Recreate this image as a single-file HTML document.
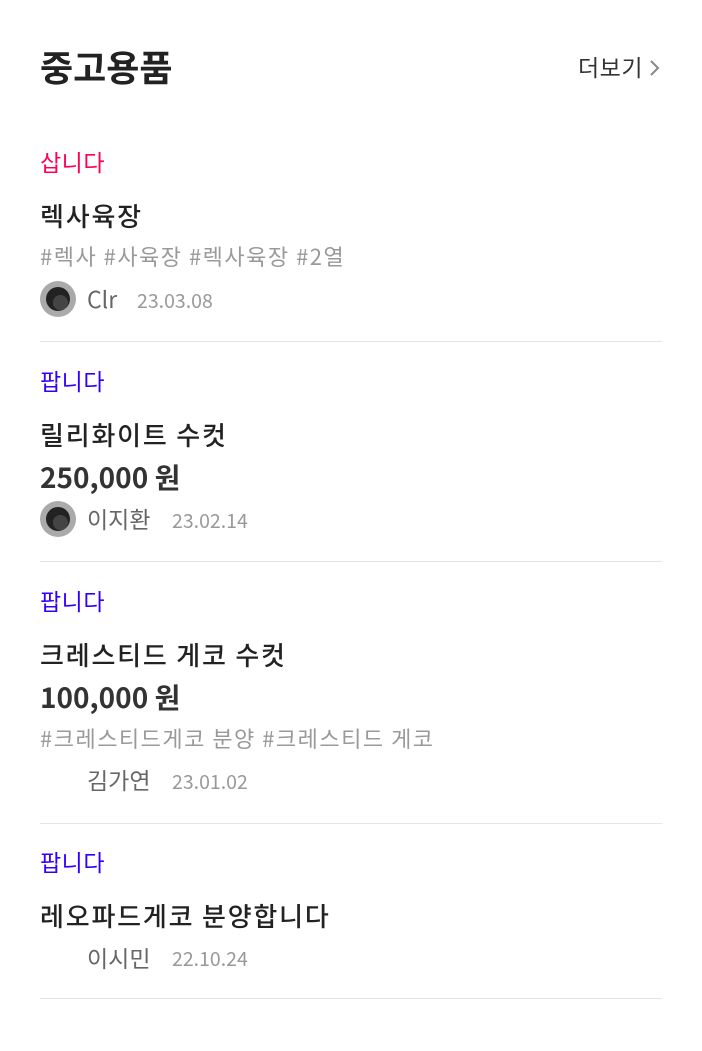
<!DOCTYPE html>
<html><head><meta charset="utf-8"><style>
body{margin:0;width:702px;height:1051px;background:#fff;position:relative;font-family:"Noto Sans CJK KR","Liberation Sans",sans-serif;color:#222;overflow:hidden}
.a{position:absolute;white-space:nowrap;line-height:1}
.h{left:40px;top:48px;font-size:36px;font-weight:700}
.more{left:578px;top:55px;font-size:23px;color:#333;letter-spacing:.5px}
.more svg{vertical-align:-1px;margin-left:7px}
.buy{font-size:23px;color:#ff0055;letter-spacing:.5px}
.sell{font-size:23px;color:#3300ff;letter-spacing:.5px}
.t{font-size:26px;font-weight:500;color:#222;letter-spacing:1.8px}
.p{font-size:28px;font-weight:700;color:#333}
.tag{font-size:22px;color:#999;letter-spacing:1.5px}
.n{font-size:23px;color:#666}
.d{font-size:19.5px;color:#999}
.av{position:absolute;left:40px;width:36px;height:36px;border-radius:50%;background:#aaa}
.av::after{content:"";position:absolute;left:6px;top:6px;width:24px;height:24px;border-radius:50%;background:radial-gradient(circle at 60% 65%,#444 0 35%,#222 36%)}
.l{position:absolute;left:40px;width:622px;height:1px;background:#e5e5e5}
</style></head><body>
<div class="a h">중고용품</div>
<div class="a more">더보기<svg width="10" height="18" viewBox="0 0 10 18"><path d="M1 2l7 7-7 7" fill="none" stroke="#888" stroke-width="2"/></svg></div>

<div class="a buy" style="left:40px;top:150px">삽니다</div>
<div class="a t" style="left:40px;top:203px">렉사육장</div>
<div class="a tag" style="left:40px;top:245px">#렉사 #사육장 #렉사육장 #2열</div>
<div class="av" style="top:281px"></div>
<div class="a n" style="left:87px;top:287px">Clr</div>
<div class="a d" style="left:137px;top:290px">23.03.08</div>
<div class="l" style="top:341px"></div>

<div class="a sell" style="left:40px;top:369px">팝니다</div>
<div class="a t" style="left:40px;top:422px">릴리화이트 수컷</div>
<div class="a p" style="left:40px;top:463px">250,000 원</div>
<div class="av" style="top:501px"></div>
<div class="a n" style="left:87px;top:507px">이지환</div>
<div class="a d" style="left:172px;top:510px">23.02.14</div>
<div class="l" style="top:561px"></div>

<div class="a sell" style="left:40px;top:589px">팝니다</div>
<div class="a t" style="left:40px;top:642px">크레스티드 게코 수컷</div>
<div class="a p" style="left:40px;top:683px">100,000 원</div>
<div class="a tag" style="left:40px;top:727px">#크레스티드게코 분양 #크레스티드 게코</div>
<div class="a n" style="left:87px;top:768px">김가연</div>
<div class="a d" style="left:172px;top:771px">23.01.02</div>
<div class="l" style="top:823px"></div>

<div class="a sell" style="left:40px;top:850px">팝니다</div>
<div class="a t" style="left:40px;top:903px">레오파드게코 분양합니다</div>
<div class="a n" style="left:87px;top:946px">이시민</div>
<div class="a d" style="left:172px;top:948px">22.10.24</div>
<div class="l" style="top:998px"></div>
</body></html>
